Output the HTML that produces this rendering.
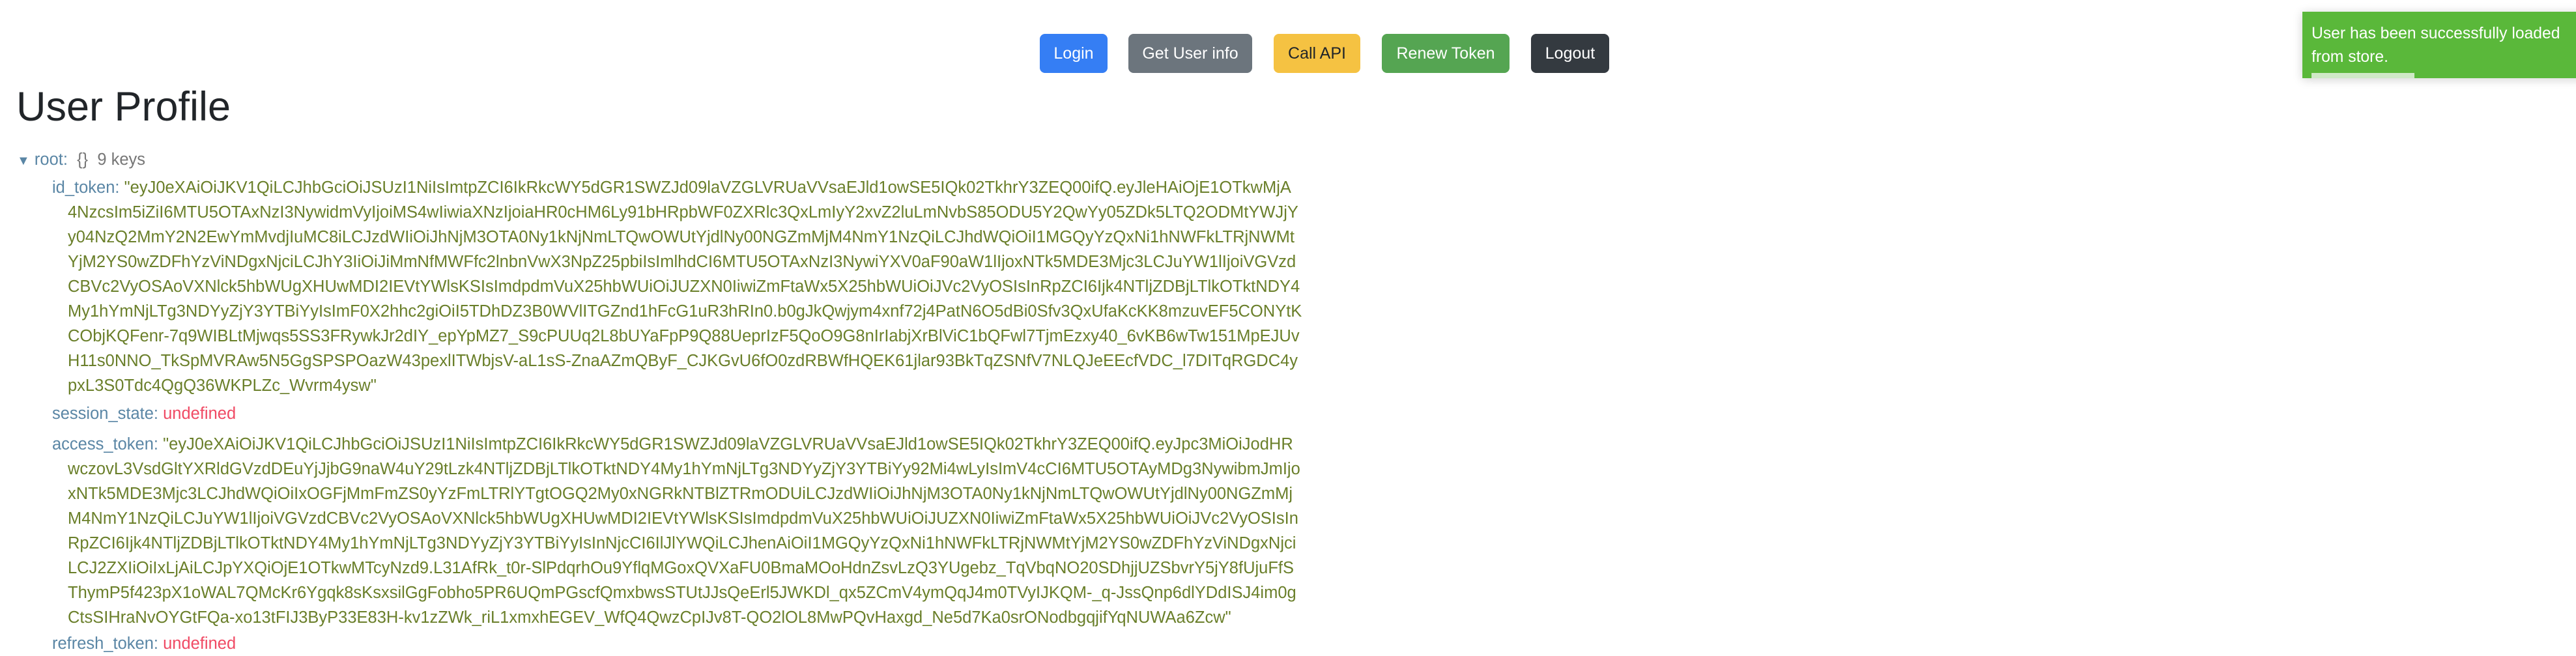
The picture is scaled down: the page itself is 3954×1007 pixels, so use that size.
<!DOCTYPE html>
<html><head><meta charset="utf-8">
<style>
html,body{margin:0;padding:0;background:#fff;width:3954px;height:984px;overflow:hidden;font-family:"Liberation Sans",Arial,sans-serif;}
.btn{position:absolute;top:52px;height:60px;border-radius:8px;font-size:25px;line-height:60px;text-align:center;color:#fff;}
h1{position:absolute;left:25px;top:119px;margin:0;font-size:63px;font-weight:normal;color:#212529;line-height:90px;}
.ln{position:absolute;font-size:25.5px;line-height:38px;height:38px;white-space:nowrap;color:#6a7f2a;}
.k{color:#5a86a5;}
.u{color:#f04a64;}
.g{color:#777;}
.toast{position:absolute;left:3534px;top:18px;width:440px;height:102px;background:#5ab83a;box-shadow:0 2px 14px rgba(0,0,0,0.18);color:#fff;font-size:24.7px;}
.toast div{position:absolute;left:14px;line-height:36px;white-space:nowrap;}
.bar{position:absolute;left:0;top:94px;width:158px;height:8px;background:#cfe9c6;}
</style></head><body>
<div class="btn" style="left:1596px;width:104px;background:#357ef4;">Login</div>
<div class="btn" style="left:1732px;width:190px;background:#6c757d;">Get User info</div>
<div class="btn" style="left:1955px;width:133px;background:#f5c242;color:#212529;">Call API</div>
<div class="btn" style="left:2121px;width:196px;background:#55a552;">Renew Token</div>
<div class="btn" style="left:2350px;width:120px;background:#343a40;">Logout</div>

<div class="toast"><div style="top:16px">User has been successfully loaded</div><div style="top:52px">from store.</div><div class="bar"></div></div>

<h1>User Profile</h1>

<div class="ln" style="left:26px;top:226px;"><span class="k" style="font-size:20px;line-height:38px">▼</span> <span class="k">root:</span>&nbsp; <span class="g">{}</span>&nbsp; <span class="g">9 keys</span></div>

<div class="ln" style="left:80px;top:269px;"><span class="k">id_token:</span> "eyJ0eXAiOiJKV1QiLCJhbGciOiJSUzI1NiIsImtpZCI6IkRkcWY5dGR1SWZJd09laVZGLVRUaVVsaEJld1owSE5IQk02TkhrY3ZEQ00ifQ.eyJleHAiOjE1OTkwMjA</div>
<div class="ln" style="left:104px;top:307px;">4NzcsIm5iZiI6MTU5OTAxNzI3NywidmVyIjoiMS4wIiwiaXNzIjoiaHR0cHM6Ly91bHRpbWF0ZXRlc3QxLmIyY2xvZ2luLmNvbS85ODU5Y2QwYy05ZDk5LTQ2ODMtYWJjY</div>
<div class="ln" style="left:104px;top:345px;">y04NzQ2MmY2N2EwYmMvdjIuMC8iLCJzdWIiOiJhNjM3OTA0Ny1kNjNmLTQwOWUtYjdlNy00NGZmMjM4NmY1NzQiLCJhdWQiOiI1MGQyYzQxNi1hNWFkLTRjNWMt</div>
<div class="ln" style="left:104px;top:383px;">YjM2YS0wZDFhYzViNDgxNjciLCJhY3IiOiJiMmNfMWFfc2lnbnVwX3NpZ25pbiIsImlhdCI6MTU5OTAxNzI3NywiYXV0aF90aW1lIjoxNTk5MDE3Mjc3LCJuYW1lIjoiVGVzd</div>
<div class="ln" style="left:104px;top:421px;">CBVc2VyOSAoVXNlck5hbWUgXHUwMDI2IEVtYWlsKSIsImdpdmVuX25hbWUiOiJUZXN0IiwiZmFtaWx5X25hbWUiOiJVc2VyOSIsInRpZCI6Ijk4NTljZDBjLTlkOTktNDY4</div>
<div class="ln" style="left:104px;top:459px;">My1hYmNjLTg3NDYyZjY3YTBiYyIsImF0X2hhc2giOiI5TDhDZ3B0WVlITGZnd1hFcG1uR3hRIn0.b0gJkQwjym4xnf72j4PatN6O5dBi0Sfv3QxUfaKcKK8mzuvEF5CONYtK</div>
<div class="ln" style="left:104px;top:497px;">CObjKQFenr-7q9WIBLtMjwqs5SS3FRywkJr2dIY_epYpMZ7_S9cPUUq2L8bUYaFpP9Q88UeprIzF5QoO9G8nIrIabjXrBlViC1bQFwl7TjmEzxy40_6vKB6wTw151MpEJUv</div>
<div class="ln" style="left:104px;top:535px;">H11s0NNO_TkSpMVRAw5N5GgSPSPOazW43pexlITWbjsV-aL1sS-ZnaAZmQByF_CJKGvU6fO0zdRBWfHQEK61jlar93BkTqZSNfV7NLQJeEEcfVDC_l7DITqRGDC4y</div>
<div class="ln" style="left:104px;top:573px;">pxL3S0Tdc4QgQ36WKPLZc_Wvrm4ysw"</div>

<div class="ln" style="left:80px;top:616px;"><span class="k">session_state:</span> <span class="u">undefined</span></div>

<div class="ln" style="left:80px;top:663px;"><span class="k">access_token:</span> "eyJ0eXAiOiJKV1QiLCJhbGciOiJSUzI1NiIsImtpZCI6IkRkcWY5dGR1SWZJd09laVZGLVRUaVVsaEJld1owSE5IQk02TkhrY3ZEQ00ifQ.eyJpc3MiOiJodHR</div>
<div class="ln" style="left:104px;top:701px;">wczovL3VsdGltYXRldGVzdDEuYjJjbG9naW4uY29tLzk4NTljZDBjLTlkOTktNDY4My1hYmNjLTg3NDYyZjY3YTBiYy92Mi4wLyIsImV4cCI6MTU5OTAyMDg3NywibmJmIjo</div>
<div class="ln" style="left:104px;top:739px;">xNTk5MDE3Mjc3LCJhdWQiOiIxOGFjMmFmZS0yYzFmLTRlYTgtOGQ2My0xNGRkNTBlZTRmODUiLCJzdWIiOiJhNjM3OTA0Ny1kNjNmLTQwOWUtYjdlNy00NGZmMj</div>
<div class="ln" style="left:104px;top:777px;">M4NmY1NzQiLCJuYW1lIjoiVGVzdCBVc2VyOSAoVXNlck5hbWUgXHUwMDI2IEVtYWlsKSIsImdpdmVuX25hbWUiOiJUZXN0IiwiZmFtaWx5X25hbWUiOiJVc2VyOSIsIn</div>
<div class="ln" style="left:104px;top:815px;">RpZCI6Ijk4NTljZDBjLTlkOTktNDY4My1hYmNjLTg3NDYyZjY3YTBiYyIsInNjcCI6IlJlYWQiLCJhenAiOiI1MGQyYzQxNi1hNWFkLTRjNWMtYjM2YS0wZDFhYzViNDgxNjci</div>
<div class="ln" style="left:104px;top:853px;">LCJ2ZXIiOiIxLjAiLCJpYXQiOjE1OTkwMTcyNzd9.L31AfRk_t0r-SlPdqrhOu9YflqMGoxQVXaFU0BmaMOoHdnZsvLzQ3YUgebz_TqVbqNO20SDhjjUZSbvrY5jY8fUjuFfS</div>
<div class="ln" style="left:104px;top:891px;">ThymP5f423pX1oWAL7QMcKr6Ygqk8sKsxsilGgFobho5PR6UQmPGscfQmxbwsSTUtJJsQeErl5JWKDl_qx5ZCmV4ymQqJ4m0TVyIJKQM-_q-JssQnp6dlYDdISJ4im0g</div>
<div class="ln" style="left:104px;top:929px;">CtsSIHraNvOYGtFQa-xo13tFIJ3ByP33E83H-kv1zZWk_riL1xmxhEGEV_WfQ4QwzCpIJv8T-QO2lOL8MwPQvHaxgd_Ne5d7Ka0srONodbgqjifYqNUWAa6Zcw"</div>

<div class="ln" style="left:80px;top:969px;"><span class="k">refresh_token:</span> <span class="u">undefined</span></div>
</body></html>
